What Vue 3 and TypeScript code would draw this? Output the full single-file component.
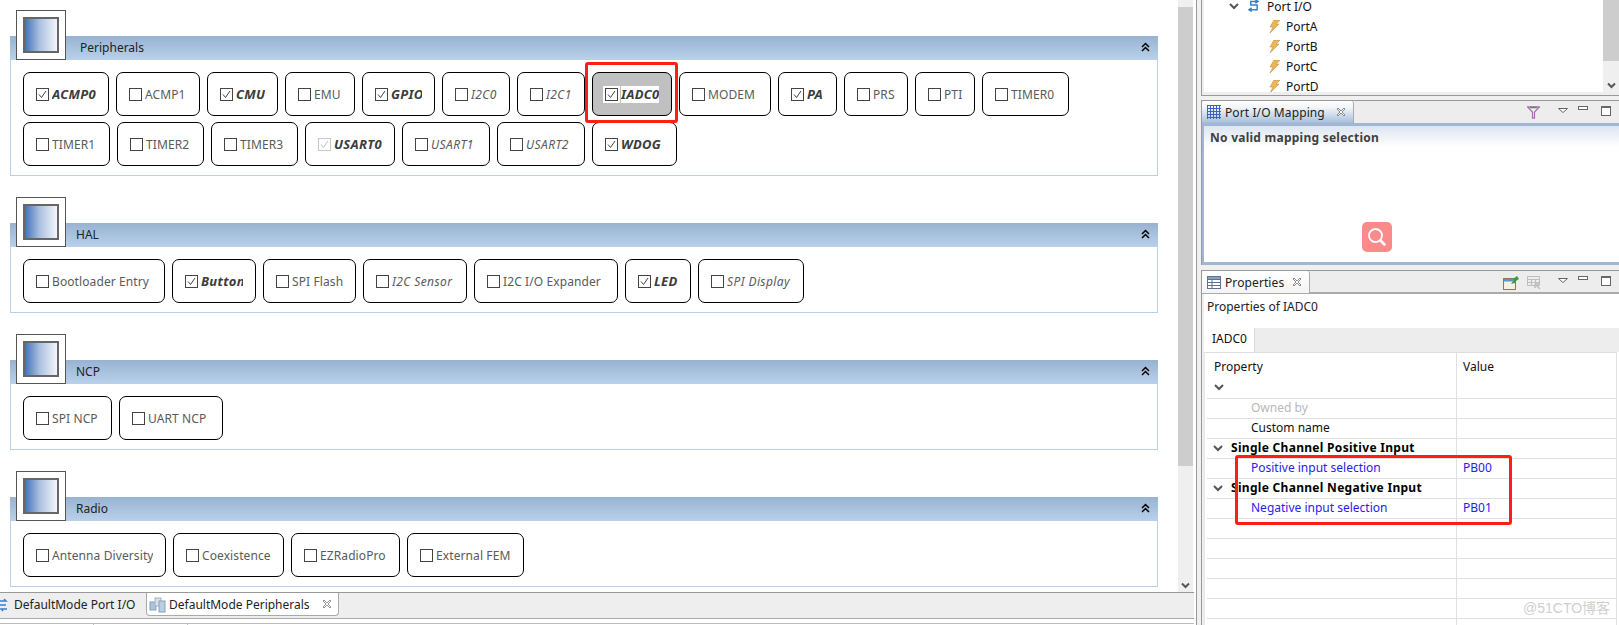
<script setup lang="ts">
interface Item {
  name: string
  w: number
  kind?: 'on' | 'dim' | 'opt' | 'sel'
}

interface Group {
  title: string
  first?: boolean
  items: Item[]
}

const groups: Group[] = [
  {
    title: 'Peripherals',
    first: true,
    items: [
      { name: 'ACMP0', w: 86, kind: 'on' },
      { name: 'ACMP1', w: 84 },
      { name: 'CMU', w: 71, kind: 'on' },
      { name: 'EMU', w: 70 },
      { name: 'GPIO', w: 73, kind: 'on' },
      { name: 'I2C0', w: 68, kind: 'opt' },
      { name: 'I2C1', w: 68, kind: 'opt' },
      { name: 'IADC0', w: 80, kind: 'sel' },
      { name: 'MODEM', w: 92 },
      { name: 'PA', w: 59, kind: 'on' },
      { name: 'PRS', w: 64 },
      { name: 'PTI', w: 60 },
      { name: 'TIMER0', w: 87 },
      { name: 'TIMER1', w: 87 },
      { name: 'TIMER2', w: 87 },
      { name: 'TIMER3', w: 87 },
      { name: 'USART0', w: 90, kind: 'dim' },
      { name: 'USART1', w: 88, kind: 'opt' },
      { name: 'USART2', w: 88, kind: 'opt' },
      { name: 'WDOG', w: 85, kind: 'on' },
    ],
  },
  {
    title: 'HAL',
    items: [
      { name: 'Bootloader Entry', w: 142 },
      { name: 'Button', w: 84, kind: 'on' },
      { name: 'SPI Flash', w: 93 },
      { name: 'I2C Sensor', w: 104, kind: 'opt' },
      { name: 'I2C I/O Expander', w: 144 },
      { name: 'LED', w: 66, kind: 'on' },
      { name: 'SPI Display', w: 106, kind: 'opt' },
    ],
  },
  {
    title: 'NCP',
    items: [
      { name: 'SPI NCP', w: 89 },
      { name: 'UART NCP', w: 104 },
    ],
  },
  {
    title: 'Radio',
    items: [
      { name: 'Antenna Diversity', w: 143 },
      { name: 'Coexistence', w: 111 },
      { name: 'EZRadioPro', w: 109 },
      { name: 'External FEM', w: 117 },
    ],
  },
]

const ports = ['PortA', 'PortB', 'PortC', 'PortD']

const rows = [
  { type: 'muted', name: 'Owned by', value: '' },
  { type: 'normal', name: 'Custom name', value: '' },
  { type: 'caption', name: 'Single Channel Positive Input', value: '' },
  { type: 'link', name: 'Positive input selection', value: 'PB00' },
  { type: 'caption', name: 'Single Channel Negative Input', value: '' },
  { type: 'link', name: 'Negative input selection', value: 'PB01' },
  { type: 'normal', name: '', value: '' },
  { type: 'normal', name: '', value: '' },
  { type: 'normal', name: '', value: '' },
  { type: 'normal', name: '', value: '' },
  { type: 'normal', name: '', value: '' },
  { type: 'normal', name: '', value: '' },
]

function isChecked(item: Item) {
  return item.kind === 'on' || item.kind === 'dim' || item.kind === 'sel'
}
</script>

<template>
  <div class="app">
    <div class="editor">
      <div class="editor-main">
        <div class="canvas">
          <section v-for="g in groups" :key="g.title" class="group">
            <div class="group-icon"><span></span></div>
            <header class="group-head" :class="{ first: g.first }">
              <span>{{ g.title }}</span>
              <svg width="9" height="10" viewBox="0 0 9 10" fill="none" stroke="#000" stroke-width="1.5">
                <path d="M1 5 4.500 1.500 8 5M1 9 4.500 5.500 8 9" />
              </svg>
            </header>
            <div class="group-body">
              <div
                v-for="item in g.items"
                :key="item.name"
                class="mod"
                :class="item.kind"
                :style="{ width: item.w + 'px' }"
              >
                <span class="box">
                  <svg v-if="isChecked(item)" width="11" height="11" viewBox="0 0 11 11" fill="none">
                    <path d="M2 5.500 4.500 8.500 9 2" />
                  </svg>
                </span>
                <span class="mod-name">{{ item.name }}</span>
              </div>
            </div>
          </section>
        </div>
        <div class="vbar">
          <div class="vbar-thumb"></div>
          <svg class="vbar-arrow" width="9" height="7" viewBox="0 0 9 7" fill="none" stroke="#555" stroke-width="2">
            <path d="M1 1.500 4.500 5 8 1.500" />
          </svg>
        </div>
      </div>

      <div class="editor-tabs">
        <div class="etab">
          <svg class="etab-clip" width="8" height="14" viewBox="0 0 8 14" fill="none" stroke="#3b7fc9" stroke-width="1.500">
            <path d="M0 3h6l-2-2M7 11H1l2 2M0 7h6" />
          </svg>
          <span>DefaultMode Port I/O</span>
        </div>
        <div class="etab active">
          <svg width="17" height="17" viewBox="0 0 17 17">
            <rect x="1" y="6" width="6" height="8" fill="#a9c4de" stroke="#8aa0b5" />
            <rect x="6" y="2" width="6" height="8" fill="#d5e2ee" stroke="#9fb2c4" />
            <rect x="10" y="5" width="6" height="11" fill="#b9cfe3" stroke="#8aa0b5" />
          </svg>
          <span>DefaultMode Peripherals</span>
          <svg class="close" width="10" height="10" viewBox="0 0 10 10" fill="#fff" stroke="#9a9a9a">
            <path d="M1 2 2 1 5 4 8 1 9 2 6 5 9 8 8 9 5 6 2 9 1 8 4 5Z" />
          </svg>
        </div>
      </div>
      <div class="editor-foot">
        <i></i><i></i><i></i>
      </div>
    </div>

    <div class="side">
      <div class="tree-view">
        <div class="tree">
          <div class="tree-row root">
            <svg width="10" height="7" viewBox="0 0 10 7" fill="none" stroke="#555" stroke-width="2">
              <path d="M1 1 5 5 9 1" />
            </svg>
            <svg class="swap" width="11" height="14" viewBox="0 0 12 14" fill="none" stroke="#3b7fc9" stroke-width="1.600">
              <path d="M11 2H3v4h7v5H1M8 0 11 2 8 4M4 9 1 11 4 13" />
            </svg>
            <span>Port I/O</span>
          </div>
          <div v-for="p in ports" :key="p" class="tree-row port">
            <svg width="11" height="13" viewBox="0 0 11 13">
              <path d="M5 0h6L7 4h3L1 13l3-6H1Z" fill="#f0b450" stroke="#b8935f" stroke-width=".6" />
            </svg>
            <span>{{ p }}</span>
          </div>
        </div>
        <div class="tree-bar">
          <div class="tree-thumb"></div>
          <svg class="tree-arrow" width="9" height="7" viewBox="0 0 9 7" fill="none" stroke="#555" stroke-width="2">
            <path d="M1 1.500 4.500 5 8 1.500" />
          </svg>
        </div>
      </div>

      <div class="view mapping">
        <div class="strip">
          <div class="vtab active">
            <svg width="14" height="14" viewBox="0 0 14 14" stroke="#3d62c4" fill="none">
              <path d="M0 .5h14M0 3.500h14M0 6.500h14M0 9.500h14M0 12.500h14M.5 0v14M3.500 0v14M6.500 0v14M9.500 0v14M12.500 0v14" />
            </svg>
            <span>Port I/O Mapping</span>
            <svg class="close" width="10" height="10" viewBox="0 0 10 10" fill="#fff" stroke="#8a8a8a">
              <path d="M1 2 2 1 5 4 8 1 9 2 6 5 9 8 8 9 5 6 2 9 1 8 4 5Z" />
            </svg>
          </div>
          <div class="tools">
            <svg class="t-filter" width="13" height="13" viewBox="0 0 13 13" fill="none" stroke="#a070a8" stroke-width="1.200">
              <path d="M.5.800h12L7.500 6v6.200H5.500V6Z" />
              <path d="M3 1.500h7" stroke="#777" stroke-width="1.500" />
            </svg>
            <svg class="t-menu" width="10" height="5" viewBox="0 0 10 5" fill="#fff" stroke="#666"><path d="M.5.500h9L5 4.500Z" /></svg>
            <span class="t-min"></span>
            <span class="t-max"></span>
          </div>
        </div>
        <div class="map-body">
          <div class="map-title">No valid mapping selection</div>
          <div class="search-badge">
            <svg width="20" height="20" viewBox="0 0 20 20" fill="none" stroke="#fff" stroke-width="1.800">
              <circle cx="8.500" cy="8.500" r="6.500" />
              <path d="M13.500 13.500 17.500 17.500" stroke-width="2.600" stroke-linecap="round" />
            </svg>
          </div>
        </div>
      </div>

      <div class="view props">
        <div class="strip flat">
          <div class="vtab">
            <svg width="14" height="13" viewBox="0 0 14 13" fill="#fff" stroke="#5d7390">
              <rect x=".5" y=".5" width="13" height="12" />
              <path d="M.5 3.500h13M.5 6.500h13M.5 9.500h13M5 3.500v9" />
              <rect x=".5" y=".5" width="13" height="3" fill="#8aa0c0" />
            </svg>
            <span>Properties</span>
            <svg class="close" width="10" height="10" viewBox="0 0 10 10" fill="#fff" stroke="#8a8a8a">
              <path d="M1 2 2 1 5 4 8 1 9 2 6 5 9 8 8 9 5 6 2 9 1 8 4 5Z" />
            </svg>
          </div>
          <div class="tools">
            <svg class="t-pin" width="16" height="14" viewBox="0 0 16 14">
              <rect x=".5" y="2.500" width="12" height="11" fill="#f4f1e2" stroke="#8a7a55" />
              <rect x="1" y="3" width="11" height="2.500" fill="#5d94d6" />
              <path d="M8 8 11 4 10 3 14 0 16 3 13 5 12 7Z" fill="#3f9a3c" />
            </svg>
            <svg class="t-grid" width="14" height="14" viewBox="0 0 14 14" fill="none" stroke="#bdbdbd">
              <path d="M.5.500h12v9H.5ZM.5 3.500h12M.5 6.500h12M4.500 3.500v6M8.500 3.500v6" />
              <path d="M8 8 13 13M8 8v4M8 8h4" stroke-width="1.500" />
            </svg>
            <svg class="t-menu" width="10" height="5" viewBox="0 0 10 5" fill="#fff" stroke="#666"><path d="M.5.500h9L5 4.500Z" /></svg>
            <span class="t-min"></span>
            <span class="t-max"></span>
          </div>
        </div>
        <div class="props-body">
          <div class="props-title">Properties of IADC0</div>
          <div class="folder">
            <div class="ftab">IADC0</div>
          </div>
          <div class="table">
            <div class="thead">
              <div class="th-name">
                <span>Property</span>
                <svg width="10" height="7" viewBox="0 0 10 7" fill="none" stroke="#555" stroke-width="2">
                  <path d="M1 1 5 5 9 1" />
                </svg>
              </div>
              <div class="th-val">Value</div>
            </div>
            <div v-for="(r, i) in rows" :key="i" class="trow" :class="r.type">
              <div class="cell-name">
                <svg v-if="r.type === 'caption'" width="10" height="7" viewBox="0 0 10 7" fill="none" stroke="#555" stroke-width="2">
                  <path d="M1 1 5 5 9 1" />
                </svg>
                <span>{{ r.name }}</span>
              </div>
              <div class="cell-val">{{ r.value }}</div>
            </div>
          </div>
        </div>
      </div>
    </div>

    <div class="mark mark-mod"></div>
    <div class="mark mark-rows"></div>
    <div class="watermark">@51CTO博客</div>
  </div>
</template>

<style scoped>
.app {
  position: relative;
  display: flex;
  width: 1619px;
  height: 625px;
  overflow: hidden;
  background: #f0f0f0;
  font-family: "Noto Sans", "Noto Sans CJK SC", sans-serif;
  font-size: 12px;
  color: #222;
}

.editor {
  width: 1197px;
  flex: none;
  display: flex;
  flex-direction: column;
  background: #fff;
  border-right: 1px solid #999;
  box-sizing: border-box;
}

.editor-main {
  display: flex;
  height: 592px;
  padding-right: 3px;
}

.canvas {
  width: 1178px;
  padding: 36px 0 0 10px;
  box-sizing: border-box;
  overflow: hidden;
}

.group {
  position: relative;
  width: 1148px;
  margin-bottom: 47px;
}

.group-icon {
  position: absolute;
  left: 6px;
  top: -26px;
  width: 50px;
  height: 50px;
  box-sizing: border-box;
  padding: 6px;
  background: #fff;
  border: 1px solid #555;
}

.group-icon span {
  display: block;
  height: 100%;
  box-sizing: border-box;
  border: 2px solid #666;
  background: linear-gradient(90deg, #4272b8, #a9c0e0 45%, #f3f5fb);
}

.group-head {
  display: flex;
  align-items: center;
  justify-content: space-between;
  height: 24px;
  box-sizing: border-box;
  padding: 0 8px 2px 66px;
  background: linear-gradient(#98b2d2, #b9d1ea);
}

.group-head.first {
  padding-left: 70px;
}

.group-body {
  display: flex;
  flex-wrap: wrap;
  gap: 6px 7px;
  padding: 12px 12px 9px;
  background: #fff;
  border: 1px solid #b8d0e8;
  border-top: none;
}

.mod {
  display: flex;
  align-items: center;
  height: 44px;
  box-sizing: border-box;
  padding: 0 12px;
  border: 1px solid #000;
  border-radius: 7px;
  color: #5a5a5a;
  letter-spacing: 0.1px;
}

.box {
  flex: none;
  width: 13px;
  height: 13px;
  box-sizing: border-box;
  margin-right: 3px;
  border: 1px solid #444;
  background: #fff;
  line-height: 0;
}

.box svg {
  stroke: #444;
  stroke-width: 1;
}

.mod-name {
  flex: 1;
  min-width: 0;
  overflow: hidden;
  white-space: nowrap;
}

.mod.on .mod-name,
.mod.dim .mod-name,
.mod.sel .mod-name {
  font-size: 13px;
  font-weight: 700;
  font-style: italic;
  letter-spacing: 0.3px;
  color: #3c3c3c;
}

.mod.opt .mod-name {
  font-style: italic;
  letter-spacing: 0.4px;
}

.mod.dim .box {
  border-color: #c8c8c8;
}

.mod.dim .box svg {
  stroke: #c0c0c0;
}

.mod.sel {
  background: #c0c0c0;
}

.mod.sel .box {
  outline: 2px solid #fff;
}

.mod.sel .mod-name {
  background: #fff;
  height: 17px;
  line-height: 17px;
}

.vbar {
  position: relative;
  width: 15px;
  background: #efefef;
}

.vbar-thumb {
  height: 459px;
  margin-top: 7px;
  background: #cdcdcd;
}

.vbar-arrow {
  position: absolute;
  left: 3px;
  bottom: 3px;
}

.editor-tabs {
  display: flex;
  height: 26px;
  margin-right: 2px;
  background: #eee;
  border-top: 1px solid #999;
  border-bottom: 1px solid #aaa;
}

.etab {
  display: flex;
  align-items: center;
  height: 23px;
  box-sizing: border-box;
  width: 146px;
  padding-left: 14px;
  position: relative;
  color: #222;
}

.etab-clip {
  position: absolute;
  left: 0;
  top: 5px;
}

.etab.active {
  width: 193px;
  padding-left: 2px;
  background: #fff;
  border: 1px solid #aaa;
  border-top: none;
  border-radius: 0 0 4px 4px;
}

.etab.active span {
  margin-left: 3px;
}

.etab .close {
  position: absolute;
  right: 6px;
  top: 6px;
}

.editor-foot {
  display: flex;
  height: 6px;
  margin-right: 2px;
  background: #fff;
}

.editor-foot i {
  width: 93px;
  margin-top: 4px;
  border-top: 1px solid #bbb;
  border-right: 1px solid #bbb;
}

.editor-foot i:last-child {
  flex: 1;
  border-right: none;
}

.side {
  width: 418px;
  flex: none;
  margin-left: 4px;
  display: flex;
  flex-direction: column;
}

.tree-view {
  display: flex;
  height: 96px;
  flex: none;
  box-sizing: border-box;
  padding: 0 0 3px 2px;
  background: #eee;
  border-left: 1px solid #999;
  border-bottom: 1px solid #999;
}

.tree {
  flex: 1;
  margin-top: -4px;
  background: #fff;
  overflow: hidden;
  color: #111;
}

.tree-row {
  display: flex;
  align-items: center;
  height: 20px;
}

.tree-row.root {
  padding-left: 25px;
}

.tree-row.root .swap {
  margin: 0 8px 0 9px;
}

.tree-row.port {
  padding-left: 65px;
}

.tree-row.port span {
  margin-left: 6px;
}

.tree-bar {
  position: relative;
  width: 16px;
  background: #efefef;
}

.tree-thumb {
  height: 61px;
  background: #cdcdcd;
}

.tree-arrow {
  position: absolute;
  left: 4px;
  top: 82px;
}

.view {
  flex: none;
  margin-top: 4px;
  border-left: 1px solid #999;
  box-sizing: border-box;
  display: flex;
  flex-direction: column;
}

.mapping {
  height: 165px;
}

.props {
  height: 355px;
  margin-top: 5px;
  background: #eee;
}

.strip {
  display: flex;
  justify-content: space-between;
  height: 23px;
  flex: none;
  background: #ededed;
  border-top: 1px solid #999;
  box-sizing: border-box;
}

.strip.flat {
  height: 24px;
  border-bottom: 2px solid #aaa;
}

.vtab {
  position: relative;
  display: flex;
  align-items: center;
  width: 108px;
  height: 22px;
  box-sizing: border-box;
  padding-left: 5px;
  background: linear-gradient(#fff, #f4f4f4);
  border-right: 1px solid #aaa;
  border-radius: 3px 3px 0 0;
  color: #222;
}

.vtab.active {
  width: 152px;
  background: linear-gradient(#fff, #f2f5fa 30%, #a6bedb);
}

.vtab span {
  margin-left: 4px;
  letter-spacing: 0.1px;
}

.vtab .close {
  position: absolute;
  right: 7px;
  top: 6px;
}

.tools {
  display: flex;
  align-items: flex-start;
  padding: 5px 8px 0 0;
}

.t-filter {
  margin-right: 18px;
}

.t-menu {
  margin: 2px 10px 0 0;
}

.t-min {
  width: 10px;
  height: 4px;
  box-sizing: border-box;
  margin-right: 13px;
  background: #fff;
  border: 1px solid #666;
}

.t-max {
  width: 10px;
  height: 10px;
  box-sizing: border-box;
  background: #fff;
  border: 1px solid #666;
  border-top-width: 2px;
}

.t-pin {
  margin-right: 8px;
}

.t-grid {
  margin-right: 17px;
}

.map-body {
  position: relative;
  flex: 1;
  background: #fff;
  border-top: 3px solid #a0b6d2;
  border-left: 2px solid #a0b6d2;
  border-bottom: 3px solid #a0b6d2;
}

.map-title {
  height: 21px;
  line-height: 22px;
  padding: 1px 0 0 6px;
  box-sizing: border-box;
  font-weight: 700;
  letter-spacing: 0.25px;
  color: #3f3f3f;
  background: linear-gradient(#dce5f1, #fff);
}

.search-badge {
  position: absolute;
  left: 158px;
  top: 96px;
  width: 30px;
  height: 30px;
  display: flex;
  align-items: center;
  justify-content: center;
  background: #fb8b8b;
  border-radius: 5px;
}

.props-body {
  flex: 1;
  margin-left: 2px;
  background: #fff;
  overflow: hidden;
}

.props-title {
  height: 34px;
  padding: 4px 0 0 3px;
  box-sizing: border-box;
  line-height: 18px;
  color: #222;
}

.folder {
  height: 24px;
  background: #ededed;
}

.ftab {
  width: 51px;
  height: 24px;
  box-sizing: border-box;
  padding-left: 8px;
  line-height: 22px;
  background: #fff;
  border-right: 1px solid #ddd;
  color: #111;
}

.table {
  margin-right: 2px;
  border-left: 1px solid #e8e8e8;
  border-top: 1px solid #ddd;
  border-right: 1px solid #e2e2e2;
  padding-left: 2px;
}

.thead {
  display: grid;
  grid-template-columns: 249px 1fr;
  height: 45px;
  border-bottom: 1px solid #e0e0e0;
  color: #111;
}

.th-name {
  padding: 5px 0 0 7px;
  line-height: 18px;
}

.th-name svg {
  display: block;
  margin: 8px 0 0 0;
}

.th-val {
  padding: 5px 0 0 6px;
  line-height: 18px;
  border-left: 1px solid #e0e0e0;
}

.trow {
  display: grid;
  grid-template-columns: 249px 1fr;
  height: 20px;
  box-sizing: border-box;
  border-bottom: 1px solid #e0e0e0;
  line-height: 18px;
}

.cell-name {
  position: relative;
  padding-left: 44px;
  white-space: nowrap;
}

.cell-name svg {
  position: absolute;
  left: 6px;
  top: 6px;
}

.cell-val {
  padding-left: 6px;
  border-left: 1px solid #e0e0e0;
}

.trow.muted {
  color: #b8b8b8;
}

.trow.normal {
  color: #111;
}

.trow.caption .cell-name {
  padding-left: 24px;
  font-weight: 700;
  letter-spacing: 0.3px;
  color: #000;
}

.trow.link {
  color: #2a20f0;
}

.mark {
  position: absolute;
  box-sizing: border-box;
  border: 3px solid #fb1f14;
  border-radius: 3px;
}

.mark-mod {
  left: 585px;
  top: 62px;
  width: 93px;
  height: 61px;
}

.mark-rows {
  left: 1235px;
  top: 455px;
  width: 277px;
  height: 70px;
}

.watermark {
  position: absolute;
  left: 1523px;
  top: 598px;
  font-family: "Liberation Sans", "Noto Sans CJK SC", sans-serif;
  font-size: 14px;
  line-height: 20px;
  color: #cfcfcf;
  white-space: nowrap;
}
</style>

<style>
html,
body {
  margin: 0;
  overflow: hidden;
  background: #fff;
}
</style>
